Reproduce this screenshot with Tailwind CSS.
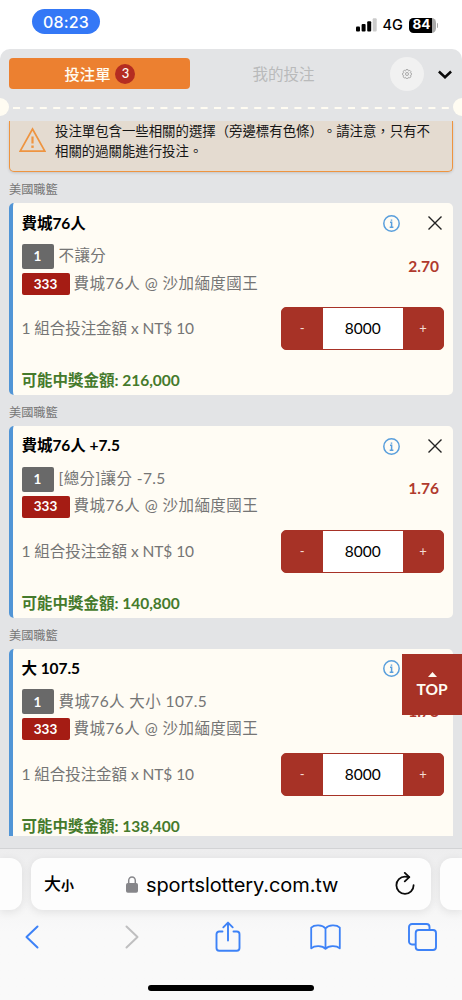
<!DOCTYPE html>
<html lang="zh-Hant">
<head>
<meta charset="utf-8">
<title>投注單</title>
<script src="https://cdn.jsdelivr.net/npm/@tailwindcss/browser@4"></script>
</head>
<body class="bg-white">
<div class="relative flex h-[1000px] w-[462px] flex-col overflow-hidden bg-white font-['Lato','Noto_Sans_CJK_TC',sans-serif] text-black">
  <!-- status bar -->
  <div class="flex h-[49px] shrink-0 items-start justify-between pl-8 pr-[24px]">
    <div class="mt-[9px] flex h-[25px] w-[68px] items-center justify-center rounded-full bg-[#3478f6] font-['Inter',sans-serif] text-[16px] font-medium tracking-[0.2px] text-white">08:23</div>
    <div class="mt-[15px] flex h-5 items-center">
      <svg class="h-[14px] w-[21px]" viewBox="0 0 21 14"><rect x="0" y="8.500" width="4" height="5" rx="1"/><rect x="5.600" y="6" width="4" height="7.500" rx="1"/><rect x="11.200" y="3.300" width="4" height="10.200" rx="1"/><rect x="16.700" y="0.300" width="4" height="13.200" rx="1" fill="#cbcbcb"/></svg>
      <span class="ml-[6px] w-[20px] font-['Inter',sans-serif] text-[14.500px] font-medium leading-5">4G</span>
      <div class="ml-[6px] flex h-[15px] w-[27px] items-center justify-center overflow-hidden rounded-[4.500px] bg-linear-to-r from-black from-84% to-[#a9a9a9] to-84% pr-px font-['Inter',sans-serif] text-[13.500px] font-bold leading-none text-white">84</div>
      <div class="ml-px h-[5px] w-[1.500px] rounded-r-full bg-[#a9a9a9]"></div>
    </div>
  </div>

  <!-- bet slip panel -->
  <div class="flex h-[799px] shrink-0 flex-col rounded-t-[10px] bg-[#e3e4e6]">
    <div class="flex h-[49px] shrink-0 items-center pl-[9px] pr-[10px]">
      <div class="flex h-[31px] w-[181px] items-center justify-center gap-[5px] rounded-[4px] bg-[#ec8030] pl-px text-[15.300px] font-medium text-[#fffcf2]">
        <span class="leading-5">投注單</span>
        <span class="flex size-[20px] items-center justify-center rounded-full bg-[#b42d21] text-[13px] leading-none">3</span>
      </div>
      <div class="w-[187px] text-center text-[15.500px] leading-5 text-[#b9babb]">我的投注</div>
      <div class="ml-[13px] flex size-[34px] items-center justify-center rounded-full bg-[#f1f1f1]">
        <svg class="size-[10px]" viewBox="0 0 20 20" fill="none" stroke="#a0a0a0" stroke-width="1.800" stroke-linejoin="round"><path d="M8.300 1h3.400l.5 2.200 1.300.6 2-1.200 2.300 2.300-1.200 2 .6 1.300 2.200.5v3l-2.200.6-.6 1.300 1.200 2-2.300 2.300-2-1.200-1.300.6-.5 2.100H8.300l-.5-2.100-1.300-.6-2 1.200-2.300-2.300 1.200-2-.6-1.300L.8 11.700v-3L2.800 8.200l.6-1.300-1.200-2 2.300-2.300 2 1.200 1.300-.6z"/><circle cx="10" cy="10" r="3"/></svg>
      </div>
      <svg class="ml-[14px] mt-px h-[9px] w-[14px]" viewBox="0 0 14 9" fill="none" stroke="#0a0a0a" stroke-width="2.500"><path d="M.9 1.500 L7 7.200 L13.100 1.500"/></svg>
    </div>
    <!-- perforated divider -->
    <div class="flex h-[18px] shrink-0 items-center justify-between overflow-hidden">
      <div class="h-[18px] w-[9px] rounded-r-full bg-[#fffcf2]"></div>
      <svg class="mt-[2px] h-[2px] w-[436px]" viewBox="0 0 436 2"><path d="M0 1H436" stroke="#fffcf2" stroke-width="2" stroke-dasharray="7 6.400"/></svg>
      <div class="h-[18px] w-[9px] rounded-l-full bg-[#fffcf2]"></div>
    </div>

    <div id="slip" class="mt-[5px] h-[715px] shrink-0 overflow-hidden px-[9px]">
      <div class="flex h-[51px] items-start rounded-b-[5px] border-x border-b border-[#ee9440] bg-[#e4dbd0] pl-[9px] shadow-[0_1px_3px_rgba(0,0,0,0.15)]">
        <svg class="mt-[6px] h-[26px] w-[27px] shrink-0" viewBox="0 0 27 26" fill="none" stroke="#ee9440" stroke-width="1.700"><path d="M13.500 2 L25.800 24.200 H1.200 Z"/><path d="M13.500 9.500V16.500" stroke-width="2.200"/><path d="M13.500 18.500V20.900" stroke-width="2.400"/></svg>
        <p class="ml-[9px] whitespace-nowrap text-[13.400px] leading-[20px] text-[#151515] [text-spacing-trim:space-all]">投注單包含一些相關的選擇（旁邊標有色條）。請注意，只有不<br>相關的過關能進行投注。</p>
      </div>
    </div>
  </div>

  <!-- browser toolbar -->
  <div class="relative h-[152px] shrink-0 border-t border-[#d2d3d5] bg-linear-to-b from-[#ededee] to-[#f9f9f9] to-55%">
    <div class="flex h-[52px] justify-between gap-[9px] pt-2 mt-px mb-[-2px]">
      <div class="h-[52px] w-[22px] rounded-r-[12px] bg-[#fdfdfd] shadow-[0_2px_10px_rgba(0,0,0,0.09)]"></div>
      <div class="flex h-[52px] w-[400px] items-center rounded-[12px] bg-[#fdfdfd] pl-[13px] pr-[16px] shadow-[0_2px_10px_rgba(0,0,0,0.09)]">
        <div class="flex w-[82px] items-baseline font-medium"><span class="text-[17px]">大</span><span class="text-[13px] font-bold">小</span></div>
        <svg class="h-[17px] w-[12px]" viewBox="0 0 12 17"><rect x="0" y="7" width="12" height="9.800" rx="1.800" fill="#86868a"/><path d="M2.700 8V4.500a3.300 3.600 0 0 1 6.600 0V8" fill="none" stroke="#86868a" stroke-width="1.500"/></svg>
        <span class="ml-[8px] grow whitespace-nowrap pt-px font-['Inter',sans-serif] text-[20px] tracking-[-0.100px]">sportslottery.com.tw</span>
        <svg class="h-[24px] w-[20px]" viewBox="0 0 20 24" fill="none" stroke="#0b0b0b" stroke-width="1.800" stroke-linecap="round" stroke-linejoin="round"><path d="M18.600 13.200A8.600 8.600 0 1 1 10 4.600C11.500 4.600 12.600 4.800 14 5.200"/><path d="M9.800 .9 14.300 5.200 9.800 9.400"/></svg>
      </div>
      <div class="h-[52px] w-[22px] rounded-l-[12px] bg-[#fdfdfd] shadow-[0_2px_10px_rgba(0,0,0,0.09)]"></div>
    </div>
    <div class="flex h-[72px] items-center pl-[25px] pt-[2px] text-[#3d82f7]">
      <svg class="h-[24px] w-[14px]" viewBox="0 0 14 24" fill="none" stroke="currentColor" stroke-width="2" stroke-linecap="round" stroke-linejoin="round"><path d="M12.500 1.500 1.500 12 12.500 22.500"/></svg>
      <svg class="ml-[86px] h-[24px] w-[14px]" viewBox="0 0 14 24" fill="none" stroke="#bfbfc0" stroke-width="2" stroke-linecap="round" stroke-linejoin="round"><path d="M1.500 1.500 12.500 12 1.500 22.500"/></svg>
      <svg class="ml-[76px] h-[32px] w-[26px]" viewBox="0 0 26 32" fill="none" stroke="currentColor" stroke-width="1.900" stroke-linecap="round" stroke-linejoin="round"><path d="M7.500 10.500H4.200A2.700 2.700 0 0 0 1.500 13.200V27A2.700 2.700 0 0 0 4.200 29.700H21.800A2.700 2.700 0 0 0 24.500 27V13.200A2.700 2.700 0 0 0 21.800 10.500H18.500M13 19.500V1.700M8.300 6.300 13 1.600 17.700 6.300"/></svg>
      <svg class="ml-[69px] h-[26px] w-[31px]" viewBox="0 0 31 26" fill="none" stroke="currentColor" stroke-width="1.800" stroke-linecap="round" stroke-linejoin="round"><path d="M15.500 4.500C12.500 .6 4.500 .4 1.200 3.600V24.300C4.500 21.300 12.500 21.300 15.500 24.800C18.500 21.300 26.500 21.300 29.800 24.300V3.600C26.500 .4 18.500 .6 15.500 4.500V24.500"/></svg>
      <svg class="ml-[66.500px] h-[28px] w-[29px]" viewBox="0 0 29 28" fill="none" stroke="currentColor" stroke-width="1.900" stroke-linejoin="round"><path d="M7.500 21.500H4A3 3 0 0 1 1 18.500V4A3 3 0 0 1 4 1H18.500A3 3 0 0 1 21.500 4V7"/><rect x="7.700" y="7" width="20.300" height="20" rx="3"/></svg>
    </div>
  </div>
  <div class="absolute bottom-[9px] left-[148px] h-[6px] w-[166px] rounded-full bg-black"></div>

  <!-- back to top -->
  <div class="absolute left-[402px] top-[654px] flex h-[61px] w-[60px] flex-col items-center bg-[#a73226] pt-[18px] text-[15.500px] font-bold leading-[19px] text-[#fffcf2]">
    <svg class="mb-[3px] h-[5px] w-[9px] shrink-0" viewBox="0 0 9 5"><path d="M0 5 4.500 0 9 5Z" fill="#fffcf2"/></svg>
    TOP
  </div>
</div>

<script>
const bets = [
  { title: '費城76人', market: '不讓分', odds: '2.70', win: '216,000' },
  { title: '費城76人 +7.5', market: '[總分]讓分 -7.5', odds: '1.76', win: '140,800' },
  { title: '大 107.5', market: '費城76人 大小 107.5', odds: '1.73', win: '138,400' },
];
document.getElementById('slip').insertAdjacentHTML('beforeend', bets.map(b => `
  <div class="h-[222.900px]">
    <div class="flex h-[31.200px] items-center pt-[5px] text-[12.200px] text-[#757575]">美國職籃</div>
    <div class="h-[191.500px] rounded-[5px] border-l-4 border-[#5195d6] bg-[#fffcf4] pl-[8.500px] pr-[9px] pt-[8px]">
      <div class="flex h-[24px] items-center">
        <span class="grow whitespace-nowrap text-[15.500px] font-bold tracking-[-0.050px]">${b.title}</span>
        <svg class="size-[17px]" viewBox="0 0 17 17" fill="none" stroke="#5a9fdc" stroke-width="1.500"><circle cx="8.500" cy="8.500" r="7.700"/><path d="M7 7.200H8.600V12.200M6.700 12.200H10.400M8.500 4.400V5.800"/></svg>
        <svg class="ml-[28px] mr-[2px] size-[14px]" viewBox="0 0 14 14" stroke="#222" stroke-width="1.400"><path d="M.5 .5 13.500 13.500M13.500 .5 .5 13.500"/></svg>
      </div>
      <div class="mt-[8px] flex h-[52px] items-center justify-between">
        <div class="flex flex-col gap-[4px] whitespace-nowrap text-[15.500px] text-[#757575]">
          <div class="flex h-[25px] items-center gap-[5px]"><span class="flex h-[25px] w-[32px] items-center justify-center rounded-[2px] bg-[#696969] text-[13.500px] font-bold text-white">1</span><span class="mb-px tracking-[0.400px]">${b.market}</span></div>
          <div class="flex h-[22px] items-center gap-[4px]"><span class="flex h-[22px] w-[48px] items-center justify-center rounded-[2px] bg-[#a51c14] text-[13.500px] font-bold text-white">333</span><span class="mb-px tracking-[0.450px]">費城76人 @ 沙加緬度國王</span></div>
        </div>
        <span class="mb-[6px] mr-[5px] text-[15.500px] font-bold text-[#b03a2e]">${b.odds}</span>
      </div>
      <div class="mt-[12px] flex h-[43px] items-center justify-between">
        <span class="whitespace-nowrap text-[15.500px] tracking-[-0.060px] text-[#757575]">1 組合投注金額 x NT$ 10</span>
        <div class="flex h-[42.500px] w-[163px] overflow-hidden rounded-[5px] border border-[#a73226] bg-[#a73226] text-[13px] text-[#f3dcd4]">
          <span class="flex w-[40.500px] items-center justify-center">-</span>
          <span class="flex grow items-center justify-center bg-white text-[15.500px] text-black">8000</span>
          <span class="flex w-[40px] items-center justify-center">+</span>
        </div>
      </div>
      <div class="mt-[18px] whitespace-nowrap text-[15.500px] font-bold leading-6 text-[#457a2c]">可能中獎金額: ${b.win}</div>
    </div>
  </div>`).join(''));
</script>
</body>
</html>
